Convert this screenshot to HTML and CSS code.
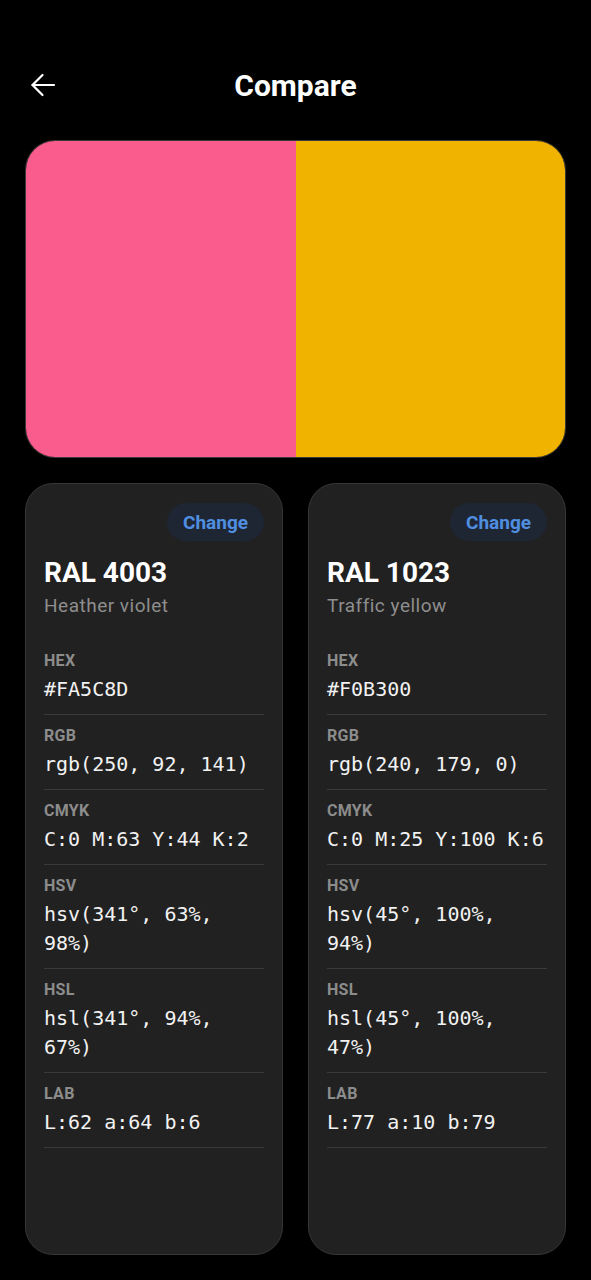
FILE: index.html
```html
<!DOCTYPE html>
<html lang="en">
<head>
<meta charset="utf-8">
<title>Compare</title>
<link rel="stylesheet" href="styles.css">
</head>
<body>
<div class="screen">
  <header class="topbar">
    <button class="back" aria-label="Back">
      <svg width="28" height="28" viewBox="0 0 28 28" fill="none" stroke="#ffffff" stroke-width="2.2" stroke-linecap="round" stroke-linejoin="round">
        <path d="M25 14H3.5"/>
        <path d="M13.5 4L3.5 14l10 10"/>
      </svg>
    </button>
    <h1 class="title">Compare</h1>
  </header>

  <div class="swatch">
    <div class="half pink"></div>
    <div class="half yellow"></div>
  </div>

  <div class="cards">
    <section class="card">
      <div class="card-top"><button class="change">Change</button></div>
      <h2 class="code">RAL 4003</h2>
      <p class="name">Heather violet</p>
      <dl class="rows">
        <div class="row"><dt>HEX</dt><dd>#FA5C8D</dd></div>
        <div class="row"><dt>RGB</dt><dd>rgb(250, 92, 141)</dd></div>
        <div class="row"><dt>CMYK</dt><dd>C:0 M:63 Y:44 K:2</dd></div>
        <div class="row"><dt>HSV</dt><dd>hsv(341°, 63%, 98%)</dd></div>
        <div class="row"><dt>HSL</dt><dd>hsl(341°, 94%, 67%)</dd></div>
        <div class="row"><dt>LAB</dt><dd>L:62 a:64 b:6</dd></div>
      </dl>
    </section>
    <section class="card">
      <div class="card-top"><button class="change">Change</button></div>
      <h2 class="code">RAL 1023</h2>
      <p class="name">Traffic yellow</p>
      <dl class="rows">
        <div class="row"><dt>HEX</dt><dd>#F0B300</dd></div>
        <div class="row"><dt>RGB</dt><dd>rgb(240, 179, 0)</dd></div>
        <div class="row"><dt>CMYK</dt><dd>C:0 M:25 Y:100 K:6</dd></div>
        <div class="row"><dt>HSV</dt><dd>hsv(45°, 100%, 94%)</dd></div>
        <div class="row"><dt>HSL</dt><dd>hsl(45°, 100%, 47%)</dd></div>
        <div class="row"><dt>LAB</dt><dd>L:77 a:10 b:79</dd></div>
      </dl>
    </section>
  </div>
</div>
</body>
</html>
```

FILE: styles.css
```css
* { box-sizing: border-box; }
html, body {
  margin: 0;
  padding: 0;
  background: #000000;
  color: #ffffff;
  font-family: Roboto, "Noto Sans", sans-serif;
}
.screen {
  width: 591px;
  height: 1280px;
  padding: 56px 25px 0 25px;
  overflow: hidden;
}
.topbar {
  position: relative;
  height: 60px;
  display: flex;
  align-items: center;
  justify-content: center;
}
.back {
  position: absolute;
  left: 2px;
  top: 13px;
  width: 32px;
  height: 32px;
  padding: 0;
  border: 0;
  background: transparent;
  display: flex;
  align-items: center;
  justify-content: center;
}
.title {
  margin: 0;
  font-size: 30px;
  font-weight: 700;
  line-height: 34px;
  letter-spacing: 0;
}
.swatch {
  margin-top: 24px;
  height: 318px;
  border-radius: 30px;
  overflow: hidden;
  display: flex;
  border: 1px solid #3a3a3a;
}
.half { flex: 1; }
.pink { background: #fa5c8d; }
.yellow { background: #f0b300; }

.cards {
  margin-top: 25px;
  display: grid;
  grid-template-columns: 258px 258px;
  column-gap: 25px;
}
.card {
  height: 772px;
  background: #212121;
  border: 1px solid #363636;
  border-radius: 28px;
  padding: 19px 18px 0 18px;
}
.card-top {
  display: flex;
  justify-content: flex-end;
}
.change {
  height: 38px;
  padding: 0 16px;
  border: 0;
  border-radius: 19px;
  background: #1e2633;
  color: #4f8ee0;
  font-family: Roboto, "Noto Sans", sans-serif;
  font-weight: 700;
  font-size: 19px;
}
.code {
  margin: 15px 0 0 0;
  font-size: 28px;
  font-weight: 700;
  line-height: 34px;
}
.name {
  margin: 3px 0 0 0;
  font-size: 19px;
  letter-spacing: 0.5px;
  line-height: 26px;
  color: #8e8e8e;
}
.rows {
  margin: 21px 0 0 0;
}
.row {
  padding: 11px 0 10px 0;
  border-bottom: 1px solid #3a3a3a;
}
.row dt {
  font-size: 16px;
  font-weight: 700;
  line-height: 20px;
  letter-spacing: 0.3px;
  color: #8c8c8c;
}
.row dd {
  margin: 4px 0 0 0;
  font-family: "DejaVu Sans Mono", "Liberation Mono", monospace;
  font-size: 20px;
  line-height: 29px;
  color: #f2f2f2;
}
```
